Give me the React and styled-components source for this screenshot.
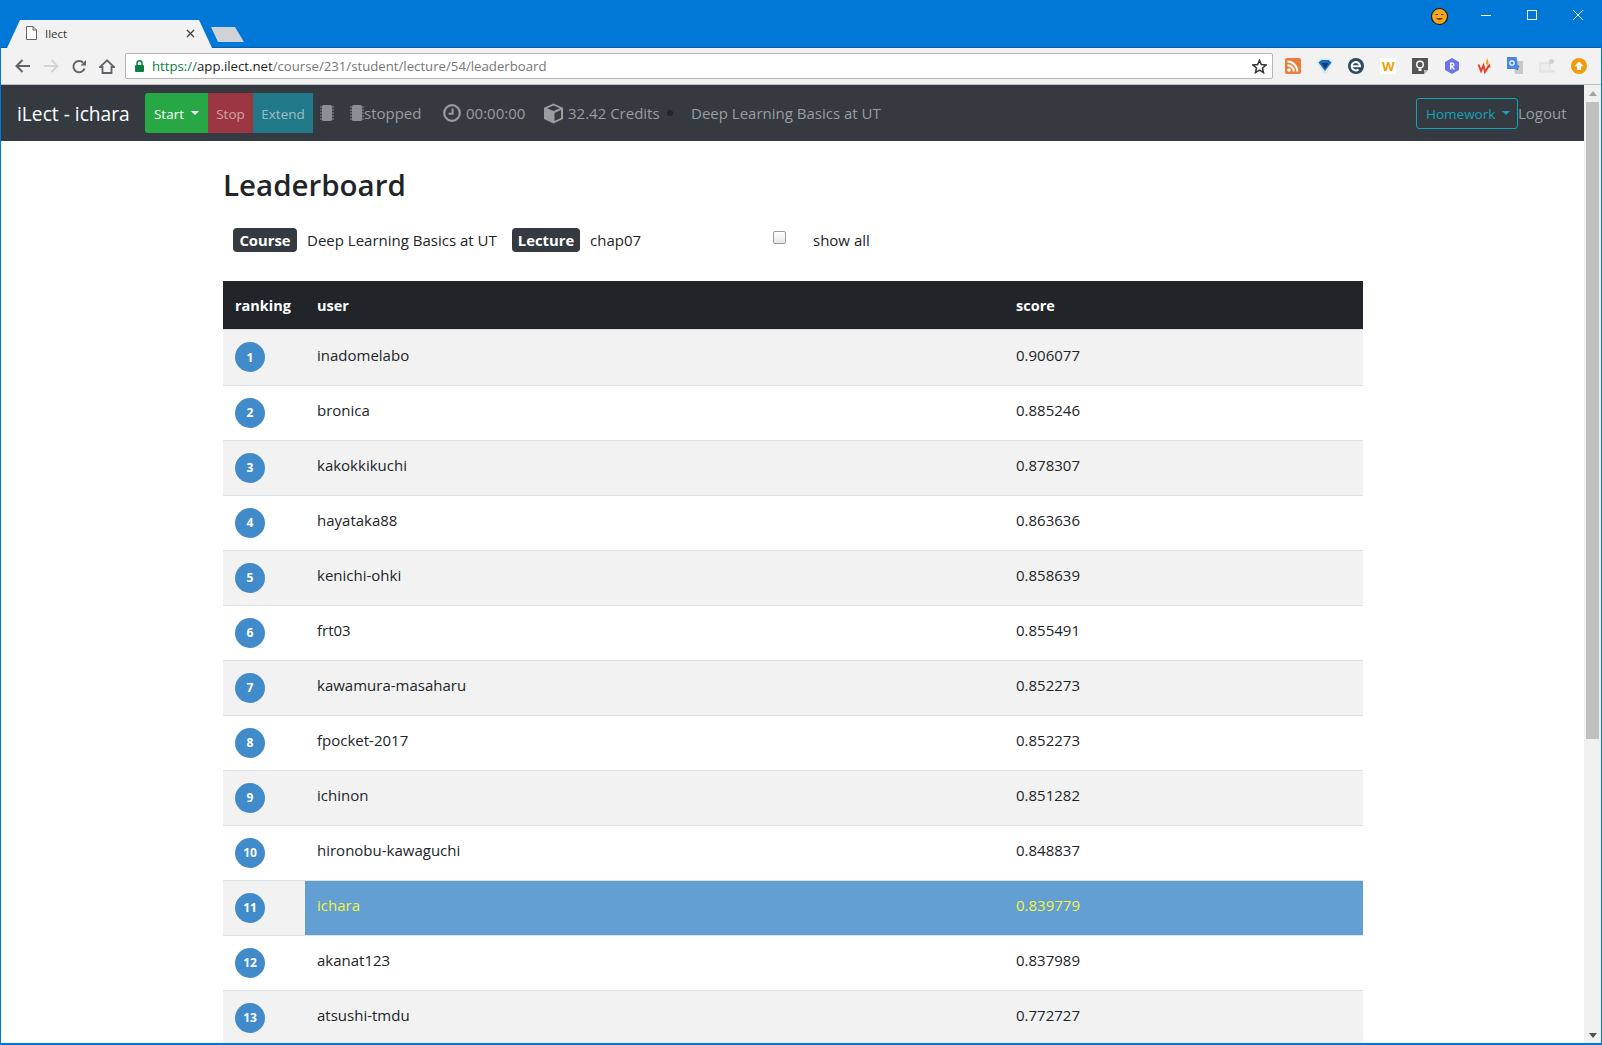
import React from "react";
import styled, { createGlobalStyle } from "styled-components";

const FONT = `"Open Sans", "Noto Sans", "Liberation Sans", sans-serif`;

const GlobalStyle = createGlobalStyle`
  html, body {
    margin: 0;
    padding: 0;
    height: 100%;
    overflow: hidden;
    background: #fff;
  }
  * {
    box-sizing: border-box;
  }
  svg {
    flex: none;
  }
`;

const scores = [
  ["inadomelabo", "0.906077"],
  ["bronica", "0.885246"],
  ["kakokkikuchi", "0.878307"],
  ["hayataka88", "0.863636"],
  ["kenichi-ohki", "0.858639"],
  ["frt03", "0.855491"],
  ["kawamura-masaharu", "0.852273"],
  ["fpocket-2017", "0.852273"],
  ["ichinon", "0.851282"],
  ["hironobu-kawaguchi", "0.848837"],
  ["ichara", "0.839779"],
  ["akanat123", "0.837989"],
  ["atsushi-tmdu", "0.772727"],
];

function Chip() {
  return (
    <svg width="14" height="18" viewBox="0 0 14 18">
      <rect x="2" y="1" width="10" height="16" rx="1.5" fill="#8b8f93" />
      <path d="M0 3h14M0 6h14M0 9h14M0 12h14M0 15h14" stroke="#8b8f93" strokeWidth="1" strokeDasharray="2 10" />
    </svg>
  );
}

function ClockIcon() {
  return (
    <svg width="18" height="18" viewBox="0 0 18 18">
      <circle cx="9" cy="9" r="7.8" fill="none" stroke="#9a9da0" strokeWidth="2.2" />
      <path d="M9.6 4.5v5.2H5.6" fill="none" stroke="#9a9da0" strokeWidth="2" />
    </svg>
  );
}

function BoxIcon() {
  return (
    <svg width="21" height="21" viewBox="0 0 21 21">
      <path d="M10.500 .5 20 4.700v11.400L10.500 20.500 1 16.100V4.700z" fill="#9a9da0" />
      <path d="M10.500 2.500 16.800 5.300 10.500 8.100 4.200 5.300z" fill="#343a40" />
      <path d="M11.500 9.900 18 7v8L11.500 18.100z" fill="#343a40" />
    </svg>
  );
}

function Extensions() {
  return (
    <ExtRow>
      <ExtSlot>
        <svg width="16" height="16" viewBox="0 0 16 16">
          <rect width="16" height="16" rx="2" fill="#ea7d3c" />
          <circle cx="4" cy="12" r="1.8" fill="#fff" />
          <path d="M2.500 7.200a6.300 6.300 0 0 1 6.300 6.300M2.500 3.600a9.900 9.900 0 0 1 9.900 9.900" fill="none" stroke="#fff" strokeWidth="2" />
        </svg>
      </ExtSlot>
      <ExtSlot>
        <svg width="16" height="16" viewBox="0 0 16 16">
          <path d="M0 4 3.500 .5h9L16 4 9.500 15.500h-3z" fill="#dfe7ee" />
          <path d="M1.500 4.500 4.500 2h7l3 2.500L8 13z" fill="#0f6fc0" />
          <path d="M4.500 5h7L8 10.500z" fill="#0a3763" />
        </svg>
      </ExtSlot>
      <ExtSlot>
        <svg width="16" height="16" viewBox="0 0 16 16">
          <circle cx="8" cy="8" r="8" fill="#2d4a5f" />
          <path d="M3.500 8.300h8.500a4.200 4.200 0 1 0-1.500 3.200" fill="none" stroke="#fff" strokeWidth="2" />
        </svg>
      </ExtSlot>
      <ExtSlot>
        <WTile>W</WTile>
      </ExtSlot>
      <ExtSlot>
        <svg width="16" height="16" viewBox="0 0 16 16">
          <path d="M0 0h16v12l-4 4H0z" fill="#555" />
          <path d="M16 12h-4v4z" fill="#bbb" />
          <circle cx="8" cy="6.500" r="3.300" fill="none" stroke="#fff" strokeWidth="1.400" />
          <path d="M6.500 10.500h3v2.500h-3z" fill="#fff" />
        </svg>
      </ExtSlot>
      <ExtSlot>
        <svg width="16" height="16" viewBox="0 0 16 16">
          <path d="M8 0 15 4v8l-7 4-7-4V4z" fill="#6a76e8" />
          <path d="M6 4.500h2.500a2 2 0 0 1 .6 3.900L11 11.500H9.300L7.500 8.600v2.900H6zm1.500 1.200v1.900h.9a1 1 0 0 0 0-1.900z" fill="#fff" />
        </svg>
      </ExtSlot>
      <ExtSlot>
        <svg width="14" height="18" viewBox="0 0 14 18">
          <path d="M1.500 7.500 4 14l2.500-5.500L8 15l4-6.500.7 2" fill="none" stroke="#e8402a" strokeWidth="2" />
          <path d="M10 1c1.500 2.500 2 5 .5 8L9 6.500z" fill="#f6a019" />
        </svg>
      </ExtSlot>
      <ExtSlot>
        <svg width="16" height="18" viewBox="0 0 16 18">
          <path d="M6 4h10v13H8z" fill="#c9c9c9" />
          <path d="m9 8 1.500 5M8 12l4-3" stroke="#4a5a70" strokeWidth="1.500" fill="none" />
          <path d="M0 0h9.500l2 12H0z" fill="#4a86e8" />
          <circle cx="5" cy="6" r="2.200" fill="none" stroke="#fff" strokeWidth="1.200" />
        </svg>
      </ExtSlot>
      <ExtSlot>
        <svg width="16" height="16" viewBox="0 0 16 16">
          <path d="M1 5h10v9H1z" fill="#ececec" stroke="#dcdcdc" />
          <path d="M0 12h16v2.500H0z" fill="#e6e6e6" />
          <circle cx="12.500" cy="3.500" r="2.500" fill="#d0d0d0" />
        </svg>
      </ExtSlot>
      <ExtSlot>
        <svg width="16" height="16" viewBox="0 0 16 16">
          <circle cx="8" cy="8" r="8" fill="#f29a0e" />
          <path d="M8 3.500 12.500 8.300H10v3.700H6V8.300H3.500z" fill="#fff" />
        </svg>
      </ExtSlot>
    </ExtRow>
  );
}

export default function App() {
  return (
    <Win>
      <GlobalStyle />
      <TitleBar>
        <Tab>
          <svg width="11" height="14" viewBox="0 0 11 14">
            <path d="M.5.500h6.500l3.500 3.500v9.500H.5z M7 .500V4h3.500" fill="#fff" stroke="#5f6368" />
          </svg>
          <TabTitle>Ilect</TabTitle>
          <TabClose>
            <svg width="9" height="9" viewBox="0 0 9 9">
              <path d="M1 1l7 7M8 1 1 8" stroke="#444" strokeWidth="1.400" />
            </svg>
          </TabClose>
        </Tab>
        <NewTab />
        <Smile>
          <svg width="17" height="17" viewBox="0 0 17 17">
            <circle cx="8.500" cy="8.500" r="8" fill="#f5a623" stroke="#222" strokeWidth="1.200" />
            <path d="M4.500 6.500h2.500M10 6.500h2.500" stroke="#6a3b00" strokeWidth="1.200" />
            <path d="M5 10c1 2.500 6 2.500 7 0z" fill="#7a4300" />
          </svg>
        </Smile>
        <WinControls>
          <WinBtn>
            <svg width="10" height="10" viewBox="0 0 10 10">
              <path d="M0 5.500h10" stroke="#fff" />
            </svg>
          </WinBtn>
          <WinBtn>
            <svg width="10" height="10" viewBox="0 0 10 10">
              <rect x=".5" y=".5" width="9" height="9" fill="none" stroke="#fff" />
            </svg>
          </WinBtn>
          <WinBtn>
            <svg width="10" height="10" viewBox="0 0 10 10">
              <path d="M0 0l10 10M10 0 0 10" stroke="#fff" />
            </svg>
          </WinBtn>
        </WinControls>
      </TitleBar>

      <Toolbar>
        <NavIcons>
          <svg width="16" height="14" viewBox="0 0 16 14">
            <path d="M15 7H2M7.500 1 1.500 7l6 6" fill="none" stroke="#5f6368" strokeWidth="2" />
          </svg>
          <svg width="16" height="14" viewBox="0 0 16 14">
            <path d="M1 7h13M8.500 1l6 6-6 6" fill="none" stroke="#d4d4d4" strokeWidth="2" />
          </svg>
          <svg width="16" height="15" viewBox="0 0 15 15">
            <path d="M13 9.500A5.700 5.700 0 1 1 11.600 3.500" fill="none" stroke="#5f6368" strokeWidth="2" />
            <path d="M9 6.500h5.500V1z" fill="#5f6368" />
          </svg>
          <svg width="16" height="15" viewBox="0 0 16 15">
            <path d="M8 1.300 1 8h2.500v6h9V8H15z" fill="none" stroke="#5f6368" strokeWidth="1.800" />
          </svg>
        </NavIcons>
        <AddressBar>
          <svg width="9" height="12" viewBox="0 0 9 12">
            <rect y="5" width="9" height="7" rx="1" fill="#0b8043" />
            <path d="M2 5.500V3.300a2.500 2.500 0 0 1 5 0v2.200" fill="none" stroke="#0b8043" strokeWidth="1.500" />
          </svg>
          <Url>
            <Scheme>https://</Scheme>app.ilect.net<UrlPath>/course/231/student/lecture/54/leaderboard</UrlPath>
          </Url>
          <svg width="15" height="15" viewBox="0 0 15 15">
            <path d="M7.500 1.300 9.300 5.600l4.700.4-3.500 3 1 4.600-4-2.400-4 2.400 1-4.600-3.500-3 4.700-.4z" fill="none" stroke="#333" strokeWidth="1.500" />
          </svg>
        </AddressBar>
        <Extensions />
      </Toolbar>

      <Main>
        <Page>
          <NavBar>
            <Brand>iLect - ichara</Brand>
            <BtnGroup>
              <NavBtn $bg="#28a745" $w={63} $color="#fff" $left>
                Start<Caret />
              </NavBtn>
              <NavBtn $bg="#9d3643" $w={45}>Stop</NavBtn>
              <NavBtn $bg="#217888" $w={60}>Extend</NavBtn>
            </BtnGroup>
            <Stat $w={30} $pad={7}><Chip /></Stat>
            <Stat $w={100} $pad={7}><Chip /><StatText $ml={0}>stopped</StatText></Stat>
            <Stat $w={100} $pad={0}><ClockIcon /><StatText $ml={5}>00:00:00</StatText></Stat>
            <Stat $w={148} $pad={0}><BoxIcon /><StatText $ml={4}>32.42 Credits</StatText><Dot /></Stat>
            <StatText $ml={0}>Deep Learning Basics at UT</StatText>
            <NavRight>
              <HomeworkBtn>Homework<Caret /></HomeworkBtn>
              <Logout>Logout</Logout>
            </NavRight>
          </NavBar>

          <Content>
            <Heading>Leaderboard</Heading>
            <FilterRow>
              <Tag $w={64}>Course</Tag>
              <FilterText $w={215}>Deep Learning Basics at UT</FilterText>
              <Tag $w={68}>Lecture</Tag>
              <FilterText $w={193}>chap07</FilterText>
              <Check />
              <FilterText $w={70}>show all</FilterText>
            </FilterRow>
            <Board>
              <thead>
                <tr>
                  <Th $w={82}>ranking</Th>
                  <Th $w={699}>user</Th>
                  <Th>score</Th>
                </tr>
              </thead>
              <tbody>
                {scores.map(([user, score], i) => {
                  const me = user === "ichara";
                  return (
                    <Row key={user} $odd={i % 2 === 0}>
                      <RankCell><Rank>{i + 1}</Rank></RankCell>
                      <Td $me={me}>{user}</Td>
                      <Td $me={me}>{score}</Td>
                    </Row>
                  );
                })}
              </tbody>
            </Board>
          </Content>
        </Page>
        <Scrollbar>
          <ScrollArrow $up />
          <Thumb />
          <ScrollArrow />
        </Scrollbar>
      </Main>
    </Win>
  );
}

const Win = styled.div`
  width: 1602px;
  height: 1045px;
  display: flex;
  flex-direction: column;
  overflow: hidden;
  border: solid #0078d7;
  border-width: 0 1px 2px 1px;
  font-family: ${FONT};
  color: #212529;
`;

const TitleBar = styled.div`
  height: 48px;
  flex: none;
  display: flex;
  align-items: flex-end;
  background: #0078d7;
  border-bottom: 1px solid #0b5ea8;
  padding-left: 6px;
`;

const Tab = styled.div`
  width: 205px;
  height: 28px;
  margin-bottom: -1px;
  display: flex;
  align-items: center;
  padding: 0 0 2px 19px;
  background: #f2f2f2;
  clip-path: polygon(0 100%, 13px 0, 192px 0, 205px 100%);
`;

const TabTitle = styled.span`
  font-size: 11.5px;
  margin-left: 8px;
  color: #333;
  flex: 1;
`;

const TabClose = styled.span`
  display: flex;
  margin-right: 17px;
`;

const NewTab = styled.div`
  width: 33px;
  height: 15px;
  margin: 0 0 5px -1px;
  background: #cfd2d6;
  clip-path: polygon(7px 100%, 0 0, 24px 0, 33px 100%);
`;

const Smile = styled.div`
  align-self: flex-start;
  display: flex;
  margin: 8px 0 0 1187px;
`;

const WinControls = styled.div`
  align-self: flex-start;
  display: flex;
  gap: 36px;
  margin: 10px 0 0 33px;
`;

const WinBtn = styled.div`
  display: flex;
  width: 10px;
  height: 10px;
`;

const Toolbar = styled.div`
  height: 37px;
  flex: none;
  display: flex;
  align-items: center;
  background: #f2f2f2;
  border-bottom: 1px solid #bcbcbc;
  padding-left: 14px;
`;

const NavIcons = styled.div`
  display: flex;
  align-items: center;
  gap: 12px;
`;

const AddressBar = styled.div`
  flex: none;
  width: 1148px;
  height: 26px;
  margin-left: 10px;
  display: flex;
  align-items: center;
  padding: 0 5px 0 9px;
  background: #fff;
  border: 1px solid #b5b5b5;
  border-radius: 2px;
`;

const Url = styled.div`
  flex: 1;
  margin-left: 8px;
  font-size: 13.2px;
  color: #222;
  white-space: nowrap;
`;

const Scheme = styled.span`
  color: #0b8043;
`;

const UrlPath = styled.span`
  color: #777;
`;

const ExtRow = styled.div`
  display: flex;
  margin-left: 4px;
`;

const ExtSlot = styled.div`
  width: 31.8px;
  height: 18px;
  display: flex;
  align-items: center;
  justify-content: center;
`;

const WTile = styled.div`
  width: 16px;
  height: 16px;
  background: #fff;
  color: #f59d00;
  font-size: 13px;
  font-weight: 700;
  line-height: 16px;
  text-align: center;
`;

const Main = styled.div`
  flex: 1;
  min-height: 0;
  display: flex;
`;

const Page = styled.div`
  flex: 1;
  min-width: 0;
  overflow: hidden;
`;

const NavBar = styled.div`
  height: 56px;
  display: flex;
  align-items: center;
  background: #343a40;
  padding: 0 16px;
  color: #9a9da0;
`;

const Brand = styled.div`
  width: 128px;
  font-size: 19.2px;
  color: #fff;
  white-space: nowrap;
`;

const BtnGroup = styled.div`
  display: flex;
  height: 40px;
`;

const NavBtn = styled.div`
  width: ${(p) => p.$w}px;
  display: flex;
  align-items: center;
  justify-content: center;
  padding-top: 1px;
  font-size: 13.5px;
  color: ${(p) => p.$color || "rgba(255, 255, 255, 0.55)"};
  background: ${(p) => p.$bg};
  border-radius: ${(p) => (p.$left ? "3px 0 0 3px" : "0")};
`;

const Caret = styled.span`
  width: 0;
  height: 0;
  margin: -2px 0 0 7px;
  border-top: 4px solid currentColor;
  border-left: 4px solid transparent;
  border-right: 4px solid transparent;
`;

const Stat = styled.div`
  width: ${(p) => p.$w}px;
  padding-left: ${(p) => p.$pad}px;
  display: flex;
  align-items: center;
  white-space: nowrap;
`;

const StatText = styled.span`
  margin-left: ${(p) => p.$ml}px;
  font-size: 15px;
  white-space: nowrap;
`;

const Dot = styled.span`
  width: 6px;
  height: 6px;
  margin-left: 7px;
  border-radius: 50%;
  background: #212529;
`;

const NavRight = styled.div`
  margin-left: auto;
  display: flex;
  align-items: center;
`;

const HomeworkBtn = styled.div`
  width: 102px;
  height: 31px;
  display: flex;
  align-items: center;
  padding: 1px 0 0 9px;
  font-size: 13.5px;
  color: #17a2b8;
  border: 1px solid #17a2b8;
  border-radius: 3px;
`;

const Logout = styled.div`
  width: 50px;
  font-size: 15px;
`;

const Content = styled.div`
  padding: 0 0 0 222px;
  width: 1362px;
`;

const Heading = styled.h2`
  margin: 0;
  padding-top: 23px;
  height: 87px;
  font-size: 29.5px;
  font-weight: 600;
  line-height: 42px;
`;

const FilterRow = styled.div`
  display: flex;
  align-items: center;
  height: 24px;
  padding-left: 10px;
`;

const Tag = styled.span`
  width: ${(p) => p.$w}px;
  height: 24px;
  display: flex;
  align-items: center;
  justify-content: center;
  background: #343a40;
  color: #fff;
  font-size: 14.8px;
  font-weight: 700;
  border-radius: 4px;
`;

const FilterText = styled.span`
  width: ${(p) => p.$w}px;
  padding-left: 10px;
  font-size: 15px;
  white-space: nowrap;
`;

const Check = styled.span`
  width: 13px;
  height: 13px;
  margin: -5px 17px 0 0;
  background: linear-gradient(#fff, #e6e6e6);
  border: 1px solid #999;
  border-radius: 2px;
`;

const Board = styled.table`
  width: 1140px;
  margin-top: 29px;
  border-collapse: collapse;
  table-layout: fixed;
  font-size: 15px;
`;

const Th = styled.th`
  width: ${(p) => (p.$w ? `${p.$w}px` : "auto")};
  height: 48px;
  padding: 2px 12px 0;
  background: #212529;
  color: #fff;
  font-size: 14.5px;
  font-weight: 700;
  text-align: left;
`;

const Row = styled.tr`
  height: 55px;
  background: ${(p) => (p.$odd ? "#f2f2f2" : "#fff")};
  &:first-child {
    height: 56px;
  }
  &:first-child td:not(:first-child) {
    padding-bottom: 4px;
  }
`;

const RankCell = styled.td`
  padding: 0 0 0 12px;
  border-top: 1px solid #dee2e6;
`;

const Td = styled.td`
  padding: 0 12px 6px;
  border-top: 1px solid #dee2e6;
  background: ${(p) => (p.$me ? "#639fd3" : "transparent")};
  color: ${(p) => (p.$me ? "#f3f33f" : "inherit")};
`;

const Rank = styled.div`
  width: 30px;
  height: 30px;
  display: flex;
  align-items: center;
  justify-content: center;
  border-radius: 50%;
  background: #428bca;
  color: #fff;
  font-size: 12px;
  font-weight: 700;
`;

const Scrollbar = styled.div`
  width: 17px;
  flex: none;
  display: flex;
  flex-direction: column;
  align-items: center;
  background: #f0f0f0;
`;

const ScrollArrow = styled.div`
  width: 0;
  height: 0;
  margin: ${(p) => (p.$up ? "6px 0 6px" : "auto 0 5px")};
  border-left: 4px solid transparent;
  border-right: 4px solid transparent;
  ${(p) => (p.$up ? "border-bottom: 5px solid #a3a3a3;" : "border-top: 5px solid #505050;")}
`;

const Thumb = styled.div`
  width: 13px;
  height: 637px;
  background: #c0c0c0;
`;
